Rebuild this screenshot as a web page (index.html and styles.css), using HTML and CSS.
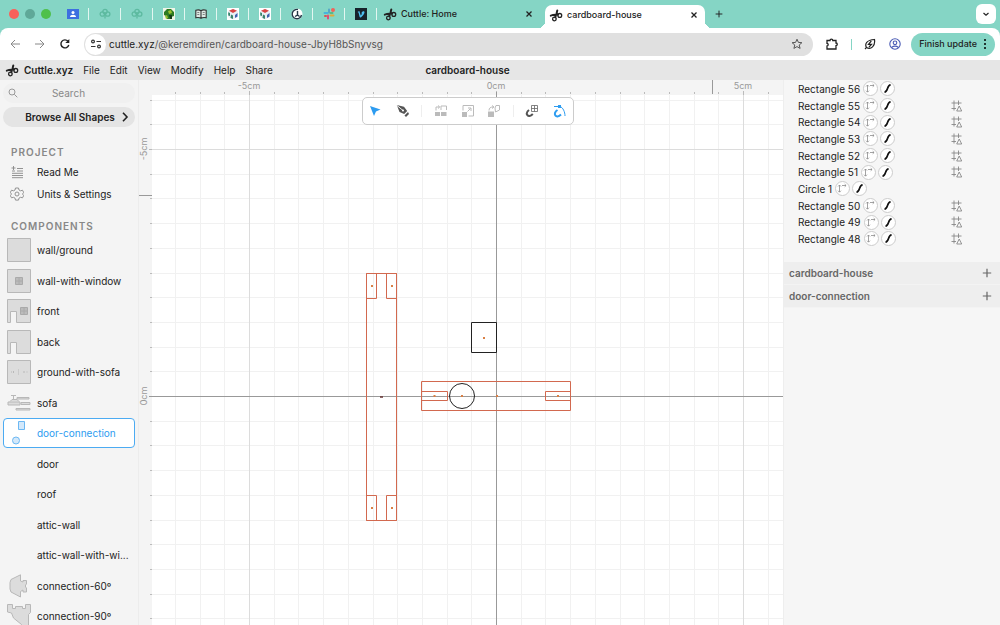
FILE: index.html
```html
<!DOCTYPE html>
<html lang="en">
<head>
<meta charset="utf-8">
<title>cardboard-house</title>
<link rel="stylesheet" href="styles.css">
</head>
<body>
<svg class="sprite" aria-hidden="true">
  <symbol id="cuttle" viewBox="0 0 14 14"><g fill="none" stroke="currentColor" stroke-linecap="round"><circle cx="10.8" cy="7.4" r="1.9" stroke-width="1.3"/><circle cx="5.4" cy="11" r="1.8" stroke-width="1.3"/><path d="M1.800 7.600 4 6.900 9 6.600M8.300 2.400 7.600 5.500 6.200 9.300" stroke-width="2"/></g></symbol>
  <symbol id="close" viewBox="0 0 8 8"><path d="M1.5 1.5l5 5m0-5l-5 5" fill="none" stroke="currentColor" stroke-width="1.3"/></symbol>
  <symbol id="plus" viewBox="0 0 10 10"><path d="M5 .8v8.4M.8 5h8.4" fill="none" stroke="currentColor" stroke-width="1.2"/></symbol>
  <symbol id="spiral" viewBox="0 0 12 12"><g fill="none" stroke="#5dbaa0" stroke-width="1.300"><circle cx="6" cy="3.6" r="2.2"/><circle cx="3.3" cy="6" r="2.2"/><circle cx="8.700" cy="6" r="2.2"/><path d="M6 4v6.500"/></g></symbol>
  <symbol id="cube" viewBox="0 0 12 12"><path d="M0 0h12v12H0z" fill="#fff"/><path d="M1 3 6 .8 11 3v6L6 11.5 1 9z" fill="#e9eef4"/><path d="M2 2.8 6 1l4 1.8L6 5z" fill="#d94343"/><path d="M1.2 4.2 3 5v3L1.2 7.6z" fill="#39836b"/><path d="M4 6.5l2 1v3.6L3.5 10z" fill="#39836b"/><path d="M8 7l2.500-2v3.600L8 10z" fill="#3e61b0"/></symbol>
  <symbol id="transform" viewBox="0 0 15 15"><circle cx="7.5" cy="7.5" r="7" fill="#fff" stroke="#ccc"/><path d="M4.500 4v7M3 5.500 4.500 4 6 5.500M3 9.700l1.500 1.500L6 9.700M7 4.500h4M9.700 3.200l1.400 1.300-1.400 1.300" fill="none" stroke="#8c8c8c" stroke-width=".8"/></symbol>
  <symbol id="stroke" viewBox="0 0 15 15"><circle cx="7.5" cy="7.5" r="7" fill="#fff" stroke="#ccc"/><path d="M4.500 11.200C8.500 11 6.500 4.200 10.600 3.800" fill="none" stroke="#111" stroke-width="1.700"/></symbol>
  <symbol id="guide" viewBox="0 0 12 12"><path d="M3 .500v10M7.500 .500V5M.500 3h10M.500 8.500H5M8.200 6 5.700 11h5z" fill="none" stroke="#888" stroke-width=".9"/></symbol>
</svg>

<header class="browser">
  <div class="tabstrip">
    <div class="lights"><i class="red"></i><i class="dim"></i><i class="green"></i></div>
    <div class="pinned">
      <span><svg viewBox="0 0 12 12"><path d="M0 1h12v10H0z" fill="#3d6fe0"/><circle cx="6" cy="4.6" r="1.5" fill="#fff"/><path d="M3 9c0-3 6-3 6 0z" fill="#fff"/></svg></span>
      <span><svg><use href="#spiral"/></svg></span>
      <span><svg><use href="#spiral"/></svg></span>
      <span><svg viewBox="0 0 12 12"><path d="M0 0h12v12H0z" fill="#eff5e8"/><path d="M1 4 4 1h4l3 3v4l-3 1-1 2H4L3 8 1 7z" fill="#2d7a22"/><path d="M5 3l3-1 1 3-3 1zM2 8l2-1 1 3-2 1z" fill="#9abf2f"/><path d="M6 7h3v4H7z" fill="#153b19"/></svg></span>
      <span><svg viewBox="0 0 12 12"><path d="M.8 2.300Q4 1.200 6 2.800q2-1.600 5.200-.5v7.400Q8 9 6 10.300 4 9 .8 9.700zM6 2.800v7.500" fill="#dfe9e4" stroke="#333" stroke-width="1.100"/><path d="M2.300 4.500h2M2.300 6.500h2M7.700 4.500h2M7.700 6.500h2" stroke="#555" stroke-width=".7"/></svg></span>
      <span><svg><use href="#cube"/></svg></span>
      <span><svg><use href="#cube"/></svg></span>
      <span><svg viewBox="0 0 12 12"><circle cx="6" cy="6" r="5.500" fill="#fff"/><path d="M7 1.500a4.700 4.700 0 1 0 3.500 5.500M6.500 3v4L4 8.500M6.500 7l2 1.500" fill="none" stroke="#243746" stroke-width="1.400"/></svg></span>
      <span><svg viewBox="0 0 12 12"><g fill="none" stroke-width="2" stroke-linecap="round"><path d="M1.500 5h3" stroke="#45b5dc"/><path d="M6 1.500v3" stroke="#55a5c9"/><path d="M7.500 5h2" stroke="#58b98a"/><path d="M7.500 7.500h3" stroke="#e0a93a"/><path d="M5 7.500v3" stroke="#dc4c78"/><path d="M2 8h1" stroke="#d95252"/></g><circle cx="10" cy="2" r="2" fill="#f0635a"/></svg></span>
      <span><svg viewBox="0 0 12 12"><path d="M0 0h12v12H0z" fill="#17222b"/><path d="M2.500 4 4.300 3l1.500 4.500Q7.500 5.500 6.500 5C7 3 9.500 2.500 9.500 4.200 9.500 6 6.500 9.500 5.300 9.500 4.200 9.500 4 5 3.400 4.600z" fill="#4dbff0"/></svg></span>
    </div>
    <div class="tab"><svg class="i14"><use href="#cuttle"/></svg><span>Cuttle: Home</span><button aria-label="Close tab"><svg class="i8"><use href="#close"/></svg></button></div>
    <div class="tab active"><svg class="i14"><use href="#cuttle"/></svg><span>cardboard-house</span><button aria-label="Close tab"><svg class="i8"><use href="#close"/></svg></button></div>
    <button class="newtab" aria-label="New tab"><svg class="i8"><use href="#plus"/></svg></button>
    <button class="tabsearch" aria-label="Search tabs"><svg class="i8" viewBox="0 0 8 8"><path d="M1.500 3 4 5.300 6.500 3" fill="none" stroke="#222" stroke-width="1.200"/></svg></button>
  </div>
  <div class="navbar">
    <button class="muted" aria-label="Back"><svg class="i12" viewBox="0 0 12 12"><path d="M11 6H2M6 2 2 6l4 4" fill="none" stroke="currentColor"/></svg></button>
    <button class="muted" aria-label="Forward"><svg class="i12" viewBox="0 0 12 12"><path d="M1 6h9M6 2l4 4-4 4" fill="none" stroke="currentColor"/></svg></button>
    <button aria-label="Reload"><svg class="i12" viewBox="0 0 12 12"><path d="M9.800 7A4 4 0 1 1 9 3.300" fill="none" stroke="currentColor" stroke-width="1.400"/><path d="M10.300 1v4h-4z" fill="currentColor"/></svg></button>
    <div class="address">
      <button class="site" aria-label="Site information"><svg class="i12" viewBox="0 0 12 12"><g fill="none" stroke="#333" stroke-width="1.200"><circle cx="3" cy="3.500" r="1.400"/><path d="M6.500 3.500H11M1 8.500h4.500"/><circle cx="9" cy="8.500" r="1.400"/></g></svg></button>
      <label class="url"><input type="text" aria-label="Address" value=""><span><b>cuttle.xyz</b>/@keremdiren/cardboard-house-JbyH8bSnyvsg</span></label>
      <button aria-label="Bookmark"><svg class="i12" viewBox="0 0 12 12"><path d="M6 1.200l1.400 3.200 3.500.3-2.700 2.300.9 3.400L6 8.600l-3.100 1.800.9-3.400L1.100 4.700l3.500-.3z" fill="none" stroke="#555"/></svg></button>
    </div>
    <button aria-label="Extensions"><svg class="i12" viewBox="0 0 12 12"><path d="M1 2.500h3C4 .7 6.800.7 6.800 2.500H10V5c1.700 0 1.700 2.600 0 2.600V11H1V8c1.600-.2 1.600-2.400 0-2.600z" fill="none" stroke="currentColor" stroke-width="1.300"/></svg></button>
    <i class="divider"></i>
    <button aria-label="Energy saver"><svg class="i12" viewBox="0 0 12 12"><path d="M1 11 2.500 9.500C.5 6 2.500 2 10.500 1.500 11.500 8 7 12 2.500 9.500M7.300 3 4.500 6.300h3L5 9" fill="none" stroke="currentColor" stroke-width="1.200"/></svg></button>
    <button class="profile" aria-label="Profile"><svg class="i12" viewBox="0 0 12 12"><g fill="none" stroke="#4a5bb5" stroke-width="1.100"><circle cx="6" cy="6" r="5.200"/><circle cx="6" cy="4.800" r="1.800"/><path d="M2.500 9.500Q6 6.800 9.500 9.500"/></g></svg></button>
    <button class="update">Finish update<svg class="dots" viewBox="0 0 4 12"><circle cx="2" cy="2" r="1"/><circle cx="2" cy="6" r="1"/><circle cx="2" cy="10" r="1"/></svg></button>
  </div>
</header>

<div class="menubar">
  <nav class="menu">
    <a href="#" class="brand"><svg class="i14"><use href="#cuttle"/></svg>Cuttle.xyz</a>
    <button>File</button><button>Edit</button><button>View</button><button>Modify</button><button>Help</button><button>Share</button>
  </nav>
  <h1>cardboard-house</h1>
</div>

<div class="app">
  <aside class="sidebar">
    <div class="search"><svg class="i10" viewBox="0 0 10 10"><circle cx="4" cy="4" r="3" fill="none" stroke="#999"/><path d="M6.300 6.300 9.300 9.300" stroke="#999"/></svg><input type="search" placeholder="Search" aria-label="Search"></div>
    <button class="browse"><span>Browse All Shapes</span><svg class="i10" viewBox="0 0 10 10"><path d="M3 .8 7 5 3 9.200" fill="none" stroke="#222" stroke-width="1.600"/></svg></button>
    <h2>PROJECT</h2>
    <ul class="project">
      <li><svg class="i14" viewBox="0 0 14 14"><path d="M3.500 1v4M1.500 3h4M7 3.500h6M7 6h6M2 8.300h11M2 10.500h11M2 12.700h11M2 6h3" fill="none" stroke="#888" stroke-width=".9"/></svg><a href="#">Read Me</a></li>
      <li><svg class="i14" viewBox="0 0 14 14"><g fill="none" stroke="#888" stroke-width=".9"><circle cx="7" cy="7" r="2"/><path d="M5.500 1h3l.5 2 1.500.8 2-.6 1.300 2.500L12.300 7l1.500 1.400-1.300 2.400-2-.5-1.500.8-.5 2h-3L5 11.100l-1.500-.8-2 .5L.2 8.400 1.700 7 .2 5.700l1.300-2.500 2 .6L5 3z"/></g></svg><a href="#">Units &amp; Settings</a></li>
    </ul>
    <h2 class="second">COMPONENTS</h2>
    <ul class="components">
      <li><svg viewBox="0 0 24 24"><path d="M.5.5h23v23H.5z"/></svg><a href="#">wall/ground</a></li>
      <li><svg viewBox="0 0 24 24"><path d="M.5.5h23v23H.5z"/><path d="M8.500 8.500h7v7h-7zM12 8.500v7M8.500 12h7" class="dark"/></svg><a href="#">wall-with-window</a></li>
      <li><svg viewBox="0 0 24 24"><path d="M.5.5h23v23h-14v-11h-6v11h-3z"/><path d="M13.500 8.500h7v7h-7zM17 8.500v7M13.500 12h7" class="dark"/></svg><a href="#">front</a></li>
      <li><svg viewBox="0 0 24 24"><path d="M.5.5h23v23h-14v-11h-6v11h-3z"/></svg><a href="#">back</a></li>
      <li><svg viewBox="0 0 24 24"><path d="M.5.5h23v23H.5z"/><path d="M4 12h1M6.500 11v2M11.500 9.500v1M11.500 13.500v1M11.500 11.500v1M17 11v2M19.500 12h1"/></svg><a href="#">ground-with-sofa</a></li>
      <li><svg viewBox="0 0 24 24"><path d="M4 4.500h5M6.500 4.500v4M3 10.500l2-2h5l2 2M1 11h12v3H1zM10 6.500h12v1.500H10zM14 11.500h9v2h-9zM9 17.500h14v1.500H9z"/></svg><a href="#">sofa</a></li>
      <li class="selected"><svg viewBox="0 0 24 24"><path d="M11.500.5h6v8h-6z"/><circle cx="9" cy="19.500" r="3.500"/></svg><a href="#">door-connection</a></li>
      <li><svg></svg><a href="#">door</a></li>
      <li><svg></svg><a href="#">roof</a></li>
      <li><svg></svg><a href="#">attic-wall</a></li>
      <li><svg></svg><a href="#">attic-wall-with-wi...</a></li>
      <li><svg viewBox="0 0 24 24"><path d="M13.500.8 4 5.500 3 8.500V15l1 3 9.500 5v-5.500L16 16v2h3.500v-4l-1-1v-2l1-1V6.500H16V8l-2.500-1z"/></svg><a href="#">connection-60º</a></li>
      <li><svg viewBox="0 0 24 24"><path d="M.5.5h5v4h3v-2h7v2h3v-4h5v8l-2 2v13h-6l-1-3-8-6.500-2-5-4-1z"/></svg><a href="#">connection-90º</a></li>
    </ul>
  </aside>

  <main class="canvas">
    <svg class="drawing" role="img" aria-label="Drawing canvas">
      <defs>
        <pattern id="grid" x="357" y="316" width="247" height="247" patternUnits="userSpaceOnUse">
          <path d="M25.500 0v247M49.500 0v247M74.500 0v247M99.500 0v247M124.500 0v247M148.500 0v247M173.500 0v247M198.500 0v247M222.500 0v247M0 25.500h247M0 49.500h247M0 74.500h247M0 99.500h247M0 124.500h247M0 148.500h247M0 173.500h247M0 198.500h247M0 222.500h247" stroke="#f1f1f1"/>
          <path d="M.5 0v247M0 .5h247" stroke="#dcdcdc"/>
        </pattern>
        <pattern id="ticksX" x="357" y="0" width="247" height="15" patternUnits="userSpaceOnUse">
          <path d="M.5 11v4M25.500 12v2M49.500 12v2M74.500 12v2M99.500 12v2M124.500 12v2M148.500 12v2M173.500 12v2M198.500 12v2M222.500 12v2" stroke="#bbb"/>
        </pattern>
        <pattern id="ticksY" x="0" y="316" width="13" height="247" patternUnits="userSpaceOnUse">
          <path d="M10 .5h3M11 25.500h2M11 49.500h2M11 74.500h2M11 99.500h2M11 124.500h2M11 148.500h2M11 173.500h2M11 198.500h2M11 222.500h2" stroke="#bbb"/>
        </pattern>
      </defs>
      <rect width="100%" height="100%" fill="#fff"/>
      <rect width="100%" height="100%" fill="url(#grid)"/>
      <rect width="100%" height="15" fill="#f4f4f4"/>
      <rect width="13" height="100%" fill="#f4f4f4"/>
      <rect x="13" width="100%" height="15" fill="url(#ticksX)"/>
      <rect y="15" width="13" height="100%" fill="url(#ticksY)"/>
      <path d="M573.500 0v14M0 115.500h13" stroke="#999"/>
      <g class="ruler">
        <text x="110" y="9">-5cm</text><text x="357" y="9">0cm</text><text x="604" y="9">5cm</text>
        <text transform="translate(8 69) rotate(-90)">-5cm</text><text transform="translate(8 316) rotate(-90)">0cm</text>
      </g>
      <svg x="357" y="316" overflow="visible">
        <path d="M.5-304v3000M-347 .5h3000" stroke="#999"/>
        <g fill="none" stroke="#d2694f">
          <path d="M-129.500-122.500h30v247h-30zM-129.500-122.500h10v25h-10zM-109.500-122.500h10v25h-10zM-129.500 99.500h10v25h-10zM-109.500 99.500h10v25h-10z"/>
          <path d="M-74.500-14.500h149v29h-149zM-74.500-4.500h26v9h-26zM49.500-4.500h25v9h-25z"/>
        </g>
        <g fill="none" stroke="#222"><path d="M-24.500-73.500h25v30h-25z"/><circle cx="-34" cy="0" r="12.500"/></g>
        <path d="M-125-110h2M-105-110h2M-125 112h2M-105 112h2M-13-58h2M-62.500 0h2M-35 0h2M61 0h2M0 0h2" stroke="#d98045" stroke-width="2"/>
        <path d="M-116 1h3" stroke="#633" stroke-width="1.500"/>
      </svg>
    </svg>
    <div class="tools" role="toolbar">
      <button aria-label="Select"><svg class="i14" viewBox="0 0 14 14"><path d="M1 2 11.500 5.500 7 7.500 5 12z" fill="#2d9cf0"/></svg></button>
      <button aria-label="Pen"><svg class="i14" viewBox="0 0 14 14"><path d="M.8 1 8 2.800l3.200 4.200-3 3-4.700-2z" fill="#555"/><path d="M1 1.500 7 6.500" stroke="#fff" stroke-width=".9"/><circle cx="7" cy="6.500" r="1" fill="#fff"/><path d="M12 8l1 2-3 3-1.500-1.500z" fill="#555"/></svg></button>
      <i></i>
      <button aria-label="Move"><svg class="i14" viewBox="0 0 14 14"><path d="M1 8h5v4H1zM7 8h5.500v4H7z" fill="#bbb"/><path d="M2 6.500V3h3M7 6V2h5.500v4M4 1.500 5.800 3 4 4.500" fill="none" stroke="#bbb"/></svg></button>
      <button aria-label="Scale"><svg class="i14" viewBox="0 0 14 14"><path d="M1 8h5v5H1z" fill="#bbb"/><path d="M2 6.500v-5h10.500V12H7.500M6.500 7.500l3-3M7 4h3v3" fill="none" stroke="#bbb"/></svg></button>
      <button aria-label="Rotate"><svg class="i14" viewBox="0 0 14 14"><path d="M1 7.500h6V13H1z" fill="#bbb"/><path d="M2 6.500C2 4 3.500 3 6 3M5 1.500 7 3 5 4.500M8 4l1-2.500h3.500V6L8.500 8z" fill="none" stroke="#bbb"/></svg></button>
      <i></i>
      <button aria-label="Snap to grid"><svg class="i14" viewBox="0 0 14 14"><path d="M4 6C-.5 9.500 3 15 7.800 10" fill="none" stroke="#555" stroke-width="2"/><path d="M6.500 1.500h6v6h-6zM9.500 1.500v6M6.500 4.500h6" fill="none" stroke="#666" stroke-width=".8"/></svg></button>
      <button aria-label="Snap to geometry"><svg class="i14" viewBox="0 0 14 14"><path d="M5.500 6C0 9.500 4 15.500 9 10.500" fill="none" stroke="#2d9cf0" stroke-width="2"/><path d="M2 2.500h6C11 3.500 13 8 13 12" fill="none" stroke="#2d9cf0"/><path d="M6 1h3v3H6z" fill="#2d9cf0"/></svg></button>
    </div>
  </main>

  <aside class="inspector">
    <ul class="shapes">
      <li><span>Rectangle 56</span><svg><use href="#transform"/></svg><svg><use href="#stroke"/></svg></li>
      <li><span>Rectangle 55</span><svg><use href="#transform"/></svg><svg><use href="#stroke"/></svg><svg class="guide"><use href="#guide"/></svg></li>
      <li><span>Rectangle 54</span><svg><use href="#transform"/></svg><svg><use href="#stroke"/></svg><svg class="guide"><use href="#guide"/></svg></li>
      <li><span>Rectangle 53</span><svg><use href="#transform"/></svg><svg><use href="#stroke"/></svg><svg class="guide"><use href="#guide"/></svg></li>
      <li><span>Rectangle 52</span><svg><use href="#transform"/></svg><svg><use href="#stroke"/></svg><svg class="guide"><use href="#guide"/></svg></li>
      <li><span>Rectangle 51</span><svg><use href="#transform"/></svg><svg><use href="#stroke"/></svg><svg class="guide"><use href="#guide"/></svg></li>
      <li><span>Circle 1</span><svg><use href="#transform"/></svg><svg><use href="#stroke"/></svg></li>
      <li><span>Rectangle 50</span><svg><use href="#transform"/></svg><svg><use href="#stroke"/></svg><svg class="guide"><use href="#guide"/></svg></li>
      <li><span>Rectangle 49</span><svg><use href="#transform"/></svg><svg><use href="#stroke"/></svg><svg class="guide"><use href="#guide"/></svg></li>
      <li><span>Rectangle 48</span><svg><use href="#transform"/></svg><svg><use href="#stroke"/></svg><svg class="guide"><use href="#guide"/></svg></li>
    </ul>
    <section><h3>cardboard-house</h3><button aria-label="Add to cardboard-house"><svg class="i10"><use href="#plus"/></svg></button></section>
    <section><h3>door-connection</h3><button aria-label="Add to door-connection"><svg class="i10"><use href="#plus"/></svg></button></section>
  </aside>
</div>
</body>
</html>
```
FILE: styles.css
```css
* { box-sizing: border-box; }
body {
  margin: 0;
  height: 100vh;
  display: flex;
  flex-direction: column;
  overflow: hidden;
  font: 10px/14px Inter, "Liberation Sans", sans-serif;
  color: #222;
}
button {
  display: flex;
  align-items: center;
  justify-content: center;
  padding: 0;
  border: 0;
  background: none;
  font: inherit;
  color: inherit;
}
a { color: inherit; text-decoration: none; }
ul { margin: 0; padding: 0; list-style: none; }
h1, h2, h3 { margin: 0; font-size: inherit; }
svg { display: block; flex: none; }
.sprite { position: absolute; width: 0; height: 0; }
.i8 { width: 8px; height: 8px; }
.i10 { width: 10px; height: 10px; }
.i12 { width: 12px; height: 12px; }
.i14 { width: 14px; height: 14px; }

/* Browser chrome */
.browser { background: #85d5c5; }
.tabstrip { display: flex; align-items: center; height: 28px; padding: 0 4px 0 9px; font-size: 9px; font-weight: 500; }
.lights { display: flex; gap: 6px; width: 48px; }
.lights i { width: 10px; height: 10px; border-radius: 50%; }
.red { background: #f9615b; }
.dim { background: #5fa898; }
.green { background: #4fc04b; }
.pinned { display: flex; }
.pinned span { display: flex; align-items: center; justify-content: center; width: 32px; height: 12px; border-right: 1px solid #e3f6f1; }
.pinned svg { width: 12px; height: 12px; }
.tab { display: flex; align-items: center; gap: 4px; width: 168px; padding: 0 12px 0 6px; white-space: nowrap; }
.tab span { flex: 1; }
.active { position: relative; align-self: flex-end; width: 160px; height: 23px; padding: 0 7px 4px 4px; background: #fff; border-radius: 7px 7px 0 0; }
.active::before, .active::after { content: ""; position: absolute; bottom: 0; width: 7px; height: 7px; }
.active::before { right: 100%; background: radial-gradient(circle at 0 0, transparent 7px, #fff 7px); }
.active::after { left: 100%; background: radial-gradient(circle at 100% 0, transparent 7px, #fff 7px); }
.newtab { margin-left: 10px; }
.tabsearch { width: 20px; height: 20px; margin-left: auto; background: #fff; border-radius: 6px; }
.navbar { display: flex; align-items: center; height: 32px; padding: 0 5px 0 9px; background: #fff; border-radius: 8px 8px 0 0; }
.navbar > button { margin-right: 13px; }
.muted { color: #888; }
.address { flex: 1; display: flex; align-items: center; height: 23px; margin-right: 13px; padding: 0 10px 0 1px; background: #e0e0e0; border-radius: 12px; }
.site { width: 21px; height: 21px; margin-right: 3px; background: #fff; border-radius: 50%; }
.url { position: relative; flex: 1; color: #555; }
.url b { font-weight: 400; color: #222; }
.url input { position: absolute; inset: 0; width: 100%; border: 0; background: none; }
.divider { width: 1px; height: 11px; margin-right: 12px; background: #85d5c5; }
.navbar .profile { margin-right: 10px; }
.navbar .update { gap: 6px; height: 23px; margin: 0; padding: 0 8px; background: #85d5c5; border-radius: 12px; font-size: 9px; font-weight: 500; white-space: nowrap; }
.dots { width: 4px; height: 12px; }

/* Application menu */
.menubar { display: grid; grid-template-columns: 152px minmax(0, 1fr) 217px; align-items: center; height: 20px; background: #e6e6e6; }
.menu { display: flex; gap: 10px; padding-left: 5px; white-space: nowrap; }
.brand { display: flex; gap: 5px; font-weight: 600; }
.menubar h1 { text-align: center; font-weight: 600; }

.app { flex: 1; min-height: 0; display: flex; }

/* Left sidebar */
.sidebar { width: 139px; flex: none; overflow: hidden; padding: 3px 3px 0 3px; background: #f4f4f4; border-right: 1px solid #ececec; }
.search { display: flex; align-items: center; height: 20px; padding: 0 5px; background: #f0f0f0; border-radius: 10px; }
.search input { flex: 1; min-width: 0; padding: 0; border: 0; background: none; font: inherit; text-align: center; }
.search input::placeholder { color: #888; }
.browse { width: 100%; height: 20px; margin-top: 4px; padding: 0 5px; background: #e4e4e4; border-radius: 10px; font-weight: 600; }
.browse span { flex: 1; padding-left: 12px; }
.sidebar h2 { margin-top: 18px; padding-left: 8px; font-weight: 600; letter-spacing: 1px; color: #888; }
.sidebar h2.second { margin-top: 14px; }
.project { padding-top: 2px; }
.project li { display: flex; align-items: center; gap: 13px; height: 22px; padding-left: 7px; }
.components { display: grid; grid-auto-rows: 30px 31px; padding-top: 2px; }
.components li { display: flex; align-items: center; gap: 6px; padding-left: 3px; border: 1px solid transparent; border-radius: 4px; white-space: nowrap; }
.components svg { width: 24px; height: 24px; fill: #dcdcdc; stroke: #b8b8b8; }
.components .dark { fill: #bbb; stroke: #aaa; }
.components .selected { background: #fff; border-color: #4cabf2; color: #2d9cf0; }
.components .selected svg { fill: #d3e8fa; stroke: #6cb8f3; }

/* Canvas */
.canvas { position: relative; flex: 1; min-width: 0; overflow: hidden; }
.drawing { width: 100%; height: 100%; }
.ruler { font-size: 9px; fill: #999; text-anchor: middle; }
.tools { position: absolute; top: 17px; left: 13px; right: 0; margin: 0 auto; display: flex; align-items: center; width: 212px; height: 28px; padding: 0; background: #fff; border: 1px solid #ccc; border-radius: 5px; }
.tools button { flex: 1; height: 100%; }
.tools i { width: 11px; height: 12px; background: linear-gradient(#eee, #eee) center / 1px 100% no-repeat; }

/* Inspector */
.inspector { width: 217px; flex: none; overflow: hidden; background: #f6f6f6; border-left: 1px solid #eee; }
.shapes { display: grid; grid-auto-rows: 17px 17px 16px; padding: 0 37px 15px 14px; }
.shapes li { display: flex; align-items: center; gap: 2px; }
.shapes span { margin-right: 1px; }
.shapes svg { width: 15px; height: 15px; }
.shapes .guide { width: 12px; height: 12px; margin-left: auto; }
.inspector section { display: flex; align-items: center; justify-content: space-between; height: 23px; padding: 0 8px 0 5px; background: #eee; border-bottom: 1px solid #f3f3f3; color: #666; }
.inspector h3 { font-weight: 600; }
```
